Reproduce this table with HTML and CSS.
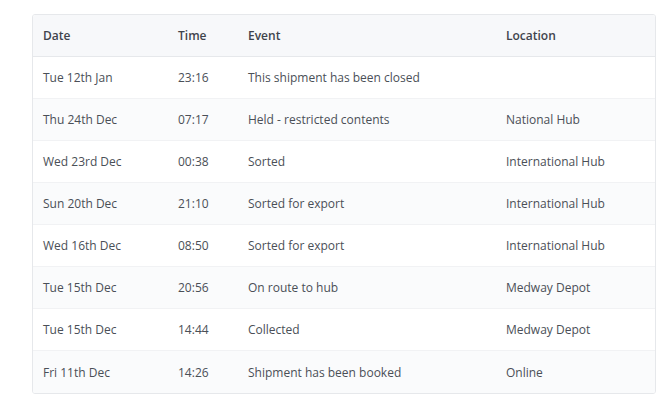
FILE: index.html
```html
<!DOCTYPE html>
<html>
<head>
<meta charset="utf-8">
<link rel="stylesheet" href="styles.css">
</head>
<body>
<div class="card">
  <table class="tracking">
    <thead>
      <tr><th class="c-date">Date</th><th class="c-time">Time</th><th class="c-event">Event</th><th class="c-loc">Location</th></tr>
    </thead>
    <tbody>
      <tr><td>Tue 12th Jan</td><td>23:16</td><td>This shipment has been closed</td><td></td></tr>
      <tr><td>Thu 24th Dec</td><td>07:17</td><td>Held - restricted contents</td><td>National Hub</td></tr>
      <tr><td>Wed 23rd Dec</td><td>00:38</td><td>Sorted</td><td>International Hub</td></tr>
      <tr><td>Sun 20th Dec</td><td>21:10</td><td>Sorted for export</td><td>International Hub</td></tr>
      <tr><td>Wed 16th Dec</td><td>08:50</td><td>Sorted for export</td><td>International Hub</td></tr>
      <tr><td>Tue 15th Dec</td><td>20:56</td><td>On route to hub</td><td>Medway Depot</td></tr>
      <tr><td>Tue 15th Dec</td><td>14:44</td><td>Collected</td><td>Medway Depot</td></tr>
      <tr><td>Fri 11th Dec</td><td>14:26</td><td>Shipment has been booked</td><td>Online</td></tr>
    </tbody>
  </table>
</div>
</body>
</html>
```

FILE: styles.css
```css
html, body {
  margin: 0;
  padding: 0;
  background: #ffffff;
}
body {
  padding: 14px 0 0 32px;
  font-family: "Open Sans", "Liberation Sans", sans-serif;
  font-size: 12px;
  color: #4a4f57;
}
.card {
  width: 624px;
  border: 1px solid #e6e8eb;
  border-radius: 3px;
  overflow: hidden;
  box-sizing: border-box;
}
.tracking {
  width: 100%;
  border-collapse: collapse;
  table-layout: fixed;
}
.tracking th, .tracking td {
  height: 42px;
  padding: 0 0 0 10px;
  text-align: left;
  vertical-align: middle;
  box-sizing: border-box;
}
.tracking th {
  height: 41px;
  font-weight: 600;
  color: #3f444c;
  background: #f7f8fa;
  border-bottom: 1px solid #e6e8eb;
}
.tracking td {
  border-top: 1px solid #f1f2f4;
}
.tracking tbody tr:first-child td {
  border-top: none;
}
.tracking tbody tr:last-child td {
  height: 43px;
  padding-top: 2px;
}
.tracking tbody tr:nth-child(even) td {
  background: #fafbfc;
}
.c-date { width: 135px; }
.c-time { width: 70px; }
.c-event { width: 258px; }
.c-loc { width: auto; }
```
